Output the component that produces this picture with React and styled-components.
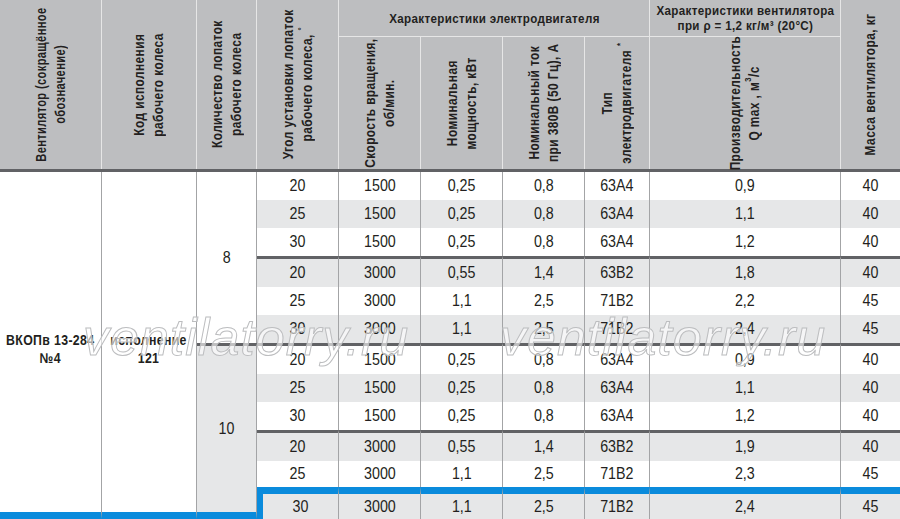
import React from 'react'
import styled, { createGlobalStyle, css } from 'styled-components'

const GlobalStyle = createGlobalStyle`
  body {
    margin: 0;
    background: #fff;
    overflow: hidden;
    font-family: "Liberation Sans", Arial, sans-serif;
    color: #231f20;
  }
`

const COLS = '102px 95px 60px 82px 82px 82px 82px 65px 191px 59px'
const BLUE = '#0a8bdc'
const DARK = '#616265'

const Page = styled.div`
  width: 900px;
  height: 519px;
  overflow: hidden;
`

const Head = styled.div`
  display: grid;
  grid-template-columns: ${COLS};
  grid-template-rows: 37px 132px;
  background: #bdbec0;
  border-bottom: 3px solid ${DARK};
`

const HeadCell = styled.div`
  box-sizing: border-box;
  grid-row: span ${p => p.$rows || 1};
  grid-column: span ${p => p.$cols || 1};
  display: flex;
  align-items: center;
  justify-content: center;
  border-right: ${p => (p.$last ? 'none' : '1px solid #e6e6e6')};
  border-bottom: ${p => (p.$group ? '1px solid #e6e6e6' : 'none')};
  font-weight: bold;
  font-size: 13.5px;
  letter-spacing: 0.4px;
  line-height: 15px;
  text-align: center;
  white-space: nowrap;
`

/* condensed look: the installed faces are all normal width */
const Squeeze = styled.span`
  display: inline-block;
  white-space: nowrap;
  transform: scaleX(${p => p.$k || 0.86});
`

const Vertical = styled.span`
  writing-mode: vertical-rl;
  transform: rotate(180deg) scaleY(${p => p.$k || 0.85});
  font-size: 14px;
  letter-spacing: 0.5px;
  line-height: 19px;
  text-align: center;
  white-space: nowrap;
`

const Sup = styled.sup`
  font-size: 9px;
  line-height: 0;
`

const Body = styled.div`
  position: relative;
  display: grid;
  grid-template-columns: ${COLS};
  grid-template-rows: 28px 28px 28px 31px 28px 28px 31px 28px 28px 31px 26px 32px;
`

const rules = {
  thick: css`border-top: 3px solid ${DARK};`,
  blue: css`border-top: 7px solid ${BLUE};`,
}

const Cell = styled.div`
  box-sizing: border-box;
  grid-row: span ${p => p.$rows || 1};
  display: flex;
  align-items: center;
  justify-content: center;
  font-size: 17px;
  background: ${p => (p.$stripe ? '#e6e7e8' : '#fff')};
  border-right: ${p => (p.$last ? 'none' : '1px solid #a3a4a6')};
  ${p => p.$rule && rules[p.$rule]}
  ${p => p.$edge && css`border-left: 6px solid ${BLUE};`}
  ${p => p.$foot && css`border-bottom: 7px solid ${BLUE};`}
`

const Label = styled(Cell)`
  font-weight: bold;
  font-size: 14px;
  letter-spacing: 0.4px;
  line-height: 18px;
  text-align: center;
  padding-top: 14px;
`

const Watermark = styled.span`
  position: absolute;
  top: 139px;
  left: ${p => p.$x}px;
  font-style: italic;
  font-size: 52px;
  line-height: 52px;
  letter-spacing: 1px;
  color: rgba(255, 255, 255, 0.6);
  -webkit-text-stroke: 1px #bcbdbf;
  pointer-events: none;
  white-space: nowrap;
`

const groupA = [
  ['20', '1500', '0,25', '0,8', '63A4', '0,9', '40'],
  ['25', '1500', '0,25', '0,8', '63A4', '1,1', '40'],
  ['30', '1500', '0,25', '0,8', '63A4', '1,2', '40'],
  ['20', '3000', '0,55', '1,4', '63B2', '1,8', '40'],
  ['25', '3000', '1,1', '2,5', '71B2', '2,2', '45'],
  ['30', '3000', '1,1', '2,5', '71B2', '2,4', '45'],
]

const groupB = [
  ['20', '1500', '0,25', '0,8', '63A4', '0,9', '40'],
  ['25', '1500', '0,25', '0,8', '63A4', '1,1', '40'],
  ['30', '1500', '0,25', '0,8', '63A4', '1,2', '40'],
  ['20', '3000', '0,55', '1,4', '63B2', '1,9', '40'],
  ['25', '3000', '1,1', '2,5', '71B2', '2,3', '45'],
  ['30', '3000', '1,1', '2,5', '71B2', '2,4', '45'],
]

function Row({ values, index, rule }) {
  return values.map((v, i) => (
    <Cell
      key={i}
      $stripe={index % 2 === 1}
      $rule={rule}
      $edge={rule === 'blue' && i === 0}
      $last={i === values.length - 1}
    >
      <Squeeze $k={0.84}>{v}</Squeeze>
    </Cell>
  ))
}

function ruleFor(group, i) {
  if (group === 'B' && i === 0) return 'thick'
  if (group === 'B' && i === 5) return 'blue'
  if (i === 3) return 'thick'
  return null
}

export default function App() {
  return (
    <Page>
      <GlobalStyle />
      <Head>
        <HeadCell $rows={2}>
          <Vertical $k={0.79}>Вентилятор (сокращённое<br />обозначение)</Vertical>
        </HeadCell>
        <HeadCell $rows={2}>
          <Vertical>Код исполнения<br />рабочего колеса</Vertical>
        </HeadCell>
        <HeadCell $rows={2}>
          <Vertical>Количество лопаток<br />рабочего колеса</Vertical>
        </HeadCell>
        <HeadCell $rows={2}>
          <Vertical>Угол установки лопаток<br />рабочего колеса, <Sup>°</Sup></Vertical>
        </HeadCell>
        <HeadCell $cols={4} $group>
          <Squeeze>Характеристики электродвигателя</Squeeze>
        </HeadCell>
        <HeadCell $group>
          <Squeeze>Характеристики вентилятора<br />при ρ = 1,2 кг/м³ (20°С)</Squeeze>
        </HeadCell>
        <HeadCell $rows={2} $last>
          <Vertical>Масса вентилятора, кг</Vertical>
        </HeadCell>
        <HeadCell>
          <Vertical>Скорость вращения,<br />об/мин.</Vertical>
        </HeadCell>
        <HeadCell>
          <Vertical>Номинальная<br />мощность, кВт</Vertical>
        </HeadCell>
        <HeadCell>
          <Vertical>Номинальный ток<br />при 380В (50 Гц), А</Vertical>
        </HeadCell>
        <HeadCell>
          <Vertical>Тип<br />электродвигателя <Sup>*</Sup></Vertical>
        </HeadCell>
        <HeadCell>
          <Vertical>Производительность<br />Q max , м<Sup>3</Sup>/с</Vertical>
        </HeadCell>
      </Head>

      <Body>
        <Label $rows={12} $foot>
          <Squeeze $k={0.88}>ВКОПв 13-284<br />№4</Squeeze>
        </Label>
        <Label $rows={12} $foot>
          <Squeeze $k={0.88}>исполнение<br />121</Squeeze>
        </Label>
        <Cell $rows={6}><Squeeze $k={0.84}>8</Squeeze></Cell>
        {groupA.map((r, i) => (
          <Row key={'a' + i} values={r} index={i} rule={ruleFor('A', i)} />
        ))}
        <Cell $rows={6} $stripe $rule="thick" $foot><Squeeze $k={0.84}>10</Squeeze></Cell>
        {groupB.map((r, i) => (
          <Row key={'b' + i} values={r} index={i} rule={ruleFor('B', i)} />
        ))}
        <Watermark $x={83}>ventilatorry.ru</Watermark>
        <Watermark $x={500}>ventilatorry.ru</Watermark>
      </Body>
    </Page>
  )
}
